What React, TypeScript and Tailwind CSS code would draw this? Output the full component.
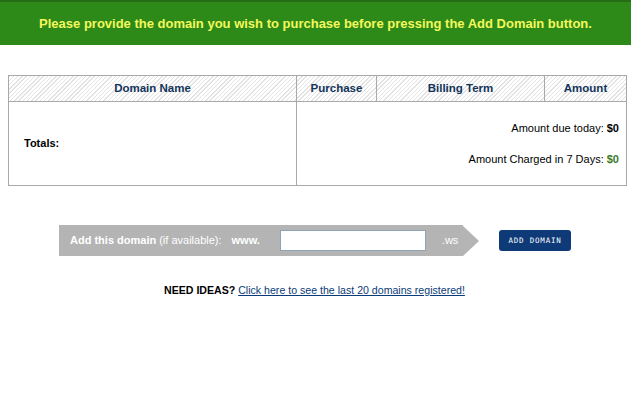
export default function App() {
  const hatch =
    "bg-[repeating-linear-gradient(135deg,#e3e3e3_0px,#e3e3e3_1px,#ffffff_1px,#ffffff_3px)]";

  return (
    <div className="w-[633px] h-[405px] bg-white font-['Liberation_Sans',Arial,sans-serif]">
      {/* Alert banner */}
      <div className="w-[631px] h-[45px] bg-[#2d8a19] border-t-2 border-[#256e16] flex items-center justify-center">
        <p className="text-[13px] font-bold text-[#f4f85c] whitespace-nowrap">
          Please provide the domain you wish to purchase before pressing the Add Domain button.
        </p>
      </div>

      {/* Cart table */}
      <table className="mt-[30px] ml-[8px] w-[619px] border-collapse text-[11px]">
        <thead>
          <tr className={`h-[26px] ${hatch} text-[#12345a] text-[11.5px]`}>
            <th className="w-[288px] border border-[#a9a9a9] font-bold">Domain Name</th>
            <th className="w-[80px] border border-[#a9a9a9] font-bold">Purchase</th>
            <th className="w-[168px] border border-[#a9a9a9] font-bold">Billing Term</th>
            <th className="border border-[#a9a9a9] font-bold">Amount</th>
          </tr>
        </thead>
        <tbody>
          <tr className="h-[84px]">
            <td className="border border-[#a9a9a9] pl-[15px] font-bold text-black">Totals:</td>
            <td colSpan={3} className="border border-[#a9a9a9] pr-[7px] text-right text-black">
              <div className="flex flex-col gap-[15px]">
                <p>
                  Amount due today: <b>$0</b>
                </p>
                <p>
                  Amount Charged in 7 Days: <b className="text-[#3b7a24]">$0</b>
                </p>
              </div>
            </td>
          </tr>
        </tbody>
      </table>

      {/* Add domain bar */}
      <div className="mt-[39px] ml-[59px] flex items-center">
        <div className="h-[31px] w-[404px] bg-[#b4b4b4] flex items-center pl-[11px] text-white text-[11px] whitespace-nowrap">
          <span className="font-bold">Add this domain</span>
          <span className="ml-[3px]">(if available):</span>
          <span className="ml-[10px] font-bold">www.</span>
          <input
            type="text"
            className="ml-[20px] h-[21px] w-[146px] bg-white border border-[#8fa3b5] outline-none"
          />
          <span className="ml-[16px]">.ws</span>
        </div>
        <div className="h-0 w-0 border-y-[15.5px] border-y-transparent border-l-[16px] border-l-[#b4b4b4]" />
        <button className="ml-[20px] h-[21px] w-[72px] rounded-[3px] bg-[#0e3a78] text-white text-[7.5px] tracking-[0.8px] font-['DejaVu_Sans_Mono',monospace]">
          ADD DOMAIN
        </button>
      </div>

      {/* Ideas link */}
      <p className="mt-[27px] ml-[164px] text-[10.6px] text-black whitespace-nowrap">
        <span className="font-bold">NEED IDEAS?</span>{" "}
        <a href="#" className="text-[#0a3b78] underline">
          Click here to see the last 20 domains registered!
        </a>
      </p>
    </div>
  );
}
